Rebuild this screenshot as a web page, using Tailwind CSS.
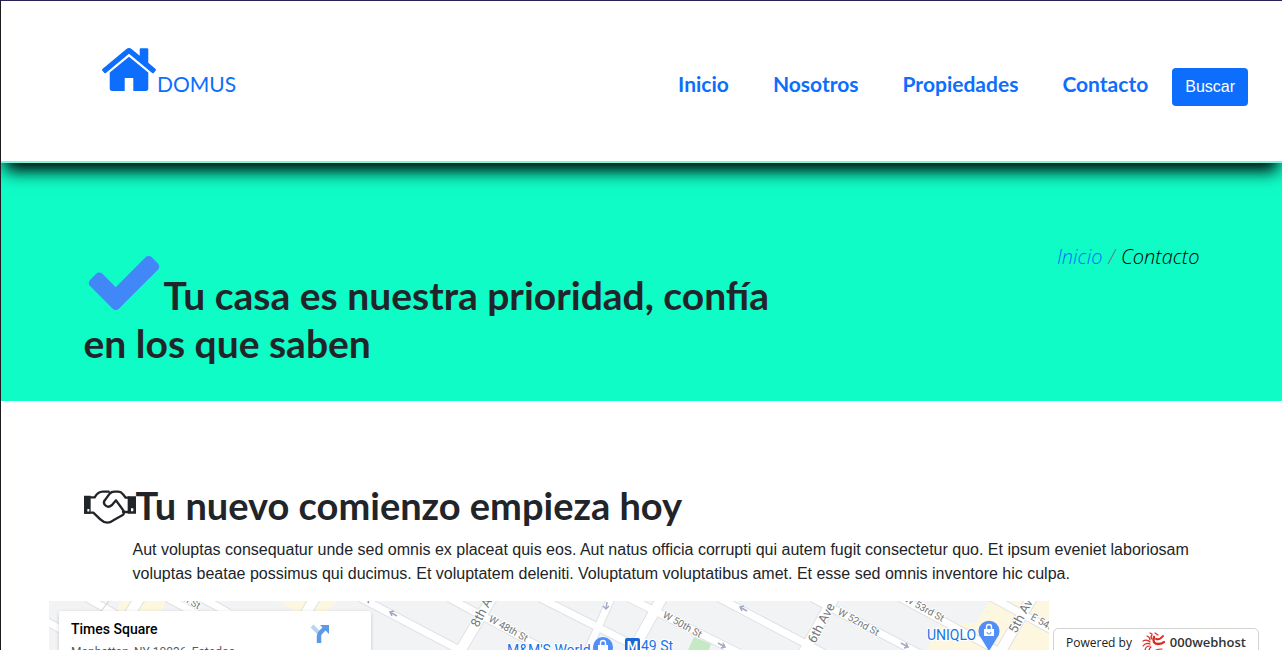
<!DOCTYPE html>
<html lang="es">
<head>
<meta charset="utf-8">
<meta name="viewport" content="width=device-width, initial-scale=1">
<title>Domus - Contacto</title>
<script src="https://cdn.jsdelivr.net/npm/@tailwindcss/browser@4"></script>
</head>
<body class="h-screen overflow-hidden border-l border-t border-l-[#1c1b22] border-t-[#2b2358] bg-white font-['Liberation_Sans',sans-serif] text-base text-[#212529]">

<header class="relative z-10 flex min-h-[162px] items-center justify-between border-b-2 border-[#7ff5df] bg-white pr-[34px] pl-[101px] shadow-[0_12px_16px_-4px_#000]">
  <a href="#" class="flex items-end gap-px pb-6 font-['Lato',sans-serif] text-[21px] leading-[22px] text-[#0d6efd]">
    <svg class="h-[43px] w-[54px]" viewBox="89 253 1614 1283" fill="currentColor" aria-hidden="true"><path d="M1472 992v480q0 26-19 45t-45 19h-384v-384h-256v384h-384q-26 0-45-19t-19-45v-480q0-1 .5-3t.5-3l575-474 575 474q1 2 1 6zm223-69l-62 74q-8 9-21 11h-3q-13 0-21-7l-692-577-692 577q-12 8-24 7-13-2-21-11l-62-74q-8-10-7-23.5t11-21.5l719-599q32-26 76-26t76 26l244 204v-195q0-14 9-23t23-9h192q14 0 23 9t9 23v408l219 182q10 8 11 21.5t-7 23.5z"/></svg>
    <span class="-mb-1">DOMUS</span>
  </a>
  <nav class="flex items-center pt-3">
    <div class="flex gap-11 pb-1.5 font-['Lato',sans-serif] text-[21px] leading-6 font-bold text-[#0d6efd]">
      <a href="#">Inicio</a>
      <a href="#">Nosotros</a>
      <a href="#">Propiedades</a>
      <a href="#">Contacto</a>
    </div>
    <button type="button" class="ml-6 h-[38px] rounded bg-[#0d6efd] px-[13px] text-base text-white">Buscar</button>
  </nav>
</header>

<section class="min-h-[238px] bg-[#0ffcc6] pt-[81px]">
  <div class="mx-auto flex max-w-[1140px] items-start justify-between px-3">
    <h1 class="max-w-[700px] pt-3 font-['Lato',sans-serif] text-[39px] leading-[48px] font-bold">
      <svg class="mr-1 ml-1 inline h-[54px] w-[72px] align-[0px] text-[#4287f8]" viewBox="121 334 1550 1188" fill="currentColor" aria-hidden="true"><path d="M1671 566q0 40-28 68l-724 724-136 136q-28 28-68 28t-68-28l-136-136-362-362q-28-28-28-68t28-68l136-136q28-28 68-28t68 28l294 295 656-657q28-28 68-28t68 28l136 136q28 28 28 68z"/></svg>Tu casa es nuestra prioridad, confía en los que saben</h1>
    <nav aria-label="Ruta" class="flex gap-1.5 font-['Open_Sans',sans-serif] text-[20px] leading-[26px] font-light italic">
      <a href="#" class="text-[#0d6efd]">Inicio</a><span class="text-[#6c757d]">/</span><span class="text-black">Contacto</span>
    </nav>
  </div>
</section>

<main class="pt-20">
  <div class="mx-auto max-w-[1140px] px-3">
    <h2 class="flex items-center font-['Lato',sans-serif] text-[38px] leading-[48px] font-bold">
      <svg class="h-[34px] w-[52px]" viewBox="42 55 156 102" fill="none" stroke="currentColor" stroke-width="7" stroke-linejoin="round" stroke-linecap="round" aria-hidden="true">
        <path d="M42 72H62V126H42ZM52 112V121H58V112ZM173 74H198V126H173ZM183 110V119H190V110Z" fill="currentColor" fill-rule="evenodd" stroke="none"/>
        <path d="M62 77H74Q84 60 98 60H116M46 123H70L91 143Q110 161 130 146L157 131Q166 124 159 115L138 86L126 100Q114 110 105 100Q98 92 106 84L119 66Q124 60 133 60H145Q153 60 159 68L167 78H176M159 121H176"/>
      </svg>
      <span class="pb-1">Tu nuevo comienzo empieza hoy</span>
    </h2>
    <p class="mt-[5px] -mr-px pl-[49px] leading-6">Aut voluptas consequatur unde sed omnis ex placeat quis eos. Aut natus officia corrupti qui autem fugit consectetur quo. Et ipsum eveniet laboriosam voluptas beatae possimus qui ducimus. Et voluptatem deleniti. Voluptatum voluptatibus amet. Et esse sed omnis inventore hic culpa.</p>
  </div>

  <div class="relative mt-[15px] ml-12 w-full max-w-[1000px] overflow-hidden bg-[#f1f3f4]">
    <svg class="block w-full font-['Roboto',sans-serif]" viewBox="0 0 1000 450" role="img" aria-label="Mapa de Times Square">
      <g fill="#fef7e0">
        <path d="M73 0H83L77 11H66ZM95 0H118L112 10H88ZM228 0L244 8L240 12H258L262 0ZM270 0H288L279 10H262Z"/>
        <path d="M941 0H1000V60H872L891 23L927 22ZM764 43L782 52H760Z"/>
      </g>
      <path d="M645 36L662 43L656 60H634Z" fill="#c5e8c5"/>
      <g fill="none" stroke="#dfe1e5">
        <path stroke-width="9" d="M-3 20L22 34M38-3L70 15M118-3L150 14M149-5L180 12M308-5L420 54M400-3L500 51M491-3L600 52M580-3L690 52M670-3L780 55M763-3L875 55M850-4L960 56M940-5L1010 33M563-5L535 58"/>
        <path stroke-width="12" d="M92-5L80 14M267-5L256 14M444-5L405 60M614-5L579 58M786-5L751 58M984-5L946 60"/>
      </g>
      <g fill="none" stroke="#fff">
        <path stroke-width="7" d="M-3 20L22 34M38-3L70 15M118-3L150 14M149-5L180 12M308-5L420 54M400-3L500 51M491-3L600 52M580-3L690 52M670-3L780 55M763-3L875 55M850-4L960 56M940-5L1010 33M563-5L535 58"/>
        <path stroke-width="10" d="M92-5L80 14M267-5L256 14M444-5L405 60M614-5L579 58M786-5L751 58M984-5L946 60"/>
      </g>
      <path d="M60 0L46 18" stroke="#c9cbce"/>
      <g fill="none" stroke="#a4a9c6" stroke-width="1.5">
        <path d="M348 15L341 11M345 10L341 11L343 15M698 10L691 6M695 5L691 6L693 10M852 42L859 46M855 47L859 46L857 42M669 42L676 46M672 47L676 46L674 42M558 1L557 8M554 5L557 8L560 5"/>
      </g>
      <g fill="#757779" stroke="#fff" stroke-width="2" paint-order="stroke" font-size="10">
        <text transform="translate(134 0) rotate(29)">h St</text>
        <text transform="translate(312 -2) rotate(29)">St</text>
        <text transform="translate(439 20) rotate(29)">W 48th St</text>
        <text transform="translate(613 16) rotate(29)">W 50th St</text>
        <text transform="translate(788 13) rotate(29)">W 52nd St</text>
        <text transform="translate(855 0) rotate(29)">W 53rd St</text>
        <text transform="translate(981 18) rotate(29)">E 54th St</text>
        <g font-size="13">
          <text transform="translate(429 27) rotate(-62)">8th Ave</text>
          <text transform="translate(766 43) rotate(-62)">6th Ave</text>
          <text transform="translate(967 33) rotate(-62)">5th Ave</text>
        </g>
      </g>
      <g fill="#1a73e8" stroke="#fff" stroke-width="2" paint-order="stroke" font-size="14">
        <text x="878" y="39">UNIQLO</text>
        <text x="458" y="54">M&amp;M'S World</text>
        <text x="592" y="50">49 St</text>
      </g>
      <g>
        <path d="M940 50L932 37A10.500 10.500 0 1 1 948 37Z" fill="#4f8ff7"/>
        <path d="M935 28H945V35H935Z" fill="#fff"/>
        <path d="M937.500 28V26a2.500 2.500 0 0 1 5 0V28" fill="none" stroke="#fff" stroke-width="1.400"/>
        <path d="M938 31a2 2 0 0 0 4 0" fill="none" stroke="#4f8ff7"/>
        <circle cx="554" cy="46" r="10" fill="#4f8ff7"/>
        <path d="M549 44H559V52H549Z" fill="#fff"/>
        <path d="M551.500 44V42a2.500 2.500 0 0 1 5 0V44" fill="none" stroke="#fff" stroke-width="1.400"/>
        <rect x="576" y="37" width="15" height="15" rx="2" fill="#1a68d8"/>
        <text x="583.500" y="49" text-anchor="middle" fill="#fff" font-size="13" font-weight="700">M</text>
      </g>
    </svg>
    <div class="absolute top-[10px] left-[10px] flex w-[312px] justify-between rounded-xs bg-white py-[10px] pr-[41px] pl-3 font-['Roboto',sans-serif] shadow-[0_1px_4px_-1px_rgba(0,0,0,0.3)]">
      <div>
        <div class="text-[14px] leading-4 font-medium text-black">Times Square</div>
        <div class="mt-[7px] text-[12px] leading-4 text-[#5b5b5b]">Manhattan, NY 10036, Estados<br>Unidos</div>
      </div>
      <svg class="mt-[3px] h-[19px] w-5" viewBox="0 0 20 19" fill="none" aria-hidden="true">
        <path d="M2 2L9 9" stroke="#b8d3f5" stroke-width="4"/>
        <path d="M9 19V12Q9 10 11 8L15 4" stroke="#5c9ae6" stroke-width="4.500"/>
        <path d="M10 1H19V10Z" fill="#5c9ae6"/>
      </svg>
    </div>
  </div>
</main>

<a href="#" class="fixed right-[23px] -bottom-2 z-20 flex h-[30px] w-[206px] items-center justify-between rounded-[5px] border border-[#d3d3d3] bg-white px-3 font-['Open_Sans',sans-serif] text-[12px] text-[#222]">
  <span>Powered by</span>
  <span class="flex items-center gap-1 text-[13px] font-semibold text-[#333]">
    <svg class="h-6 w-6" viewBox="0 0 24 24" fill="none" stroke="#dc2a20" stroke-linecap="round" aria-hidden="true">
      <path stroke-width="2.400" d="M12 6Q10 13 16 13Q20 13 22 11"/>
      <path stroke-width="2" d="M14 8Q18 9 21 5"/>
      <path stroke-width="1.200" d="M10 4Q8 6 10 8M5 5Q8 6 8 9M1 10Q5 8 8 11M1 15Q4 11 8 13M3 20Q3 15 8 15M8 22Q6 18 9 16M13 22Q12 18 20 18M13 2L16 4M8 2L10 3"/>
    </svg>
    000webhost
  </span>
</a>
</body>
</html>
